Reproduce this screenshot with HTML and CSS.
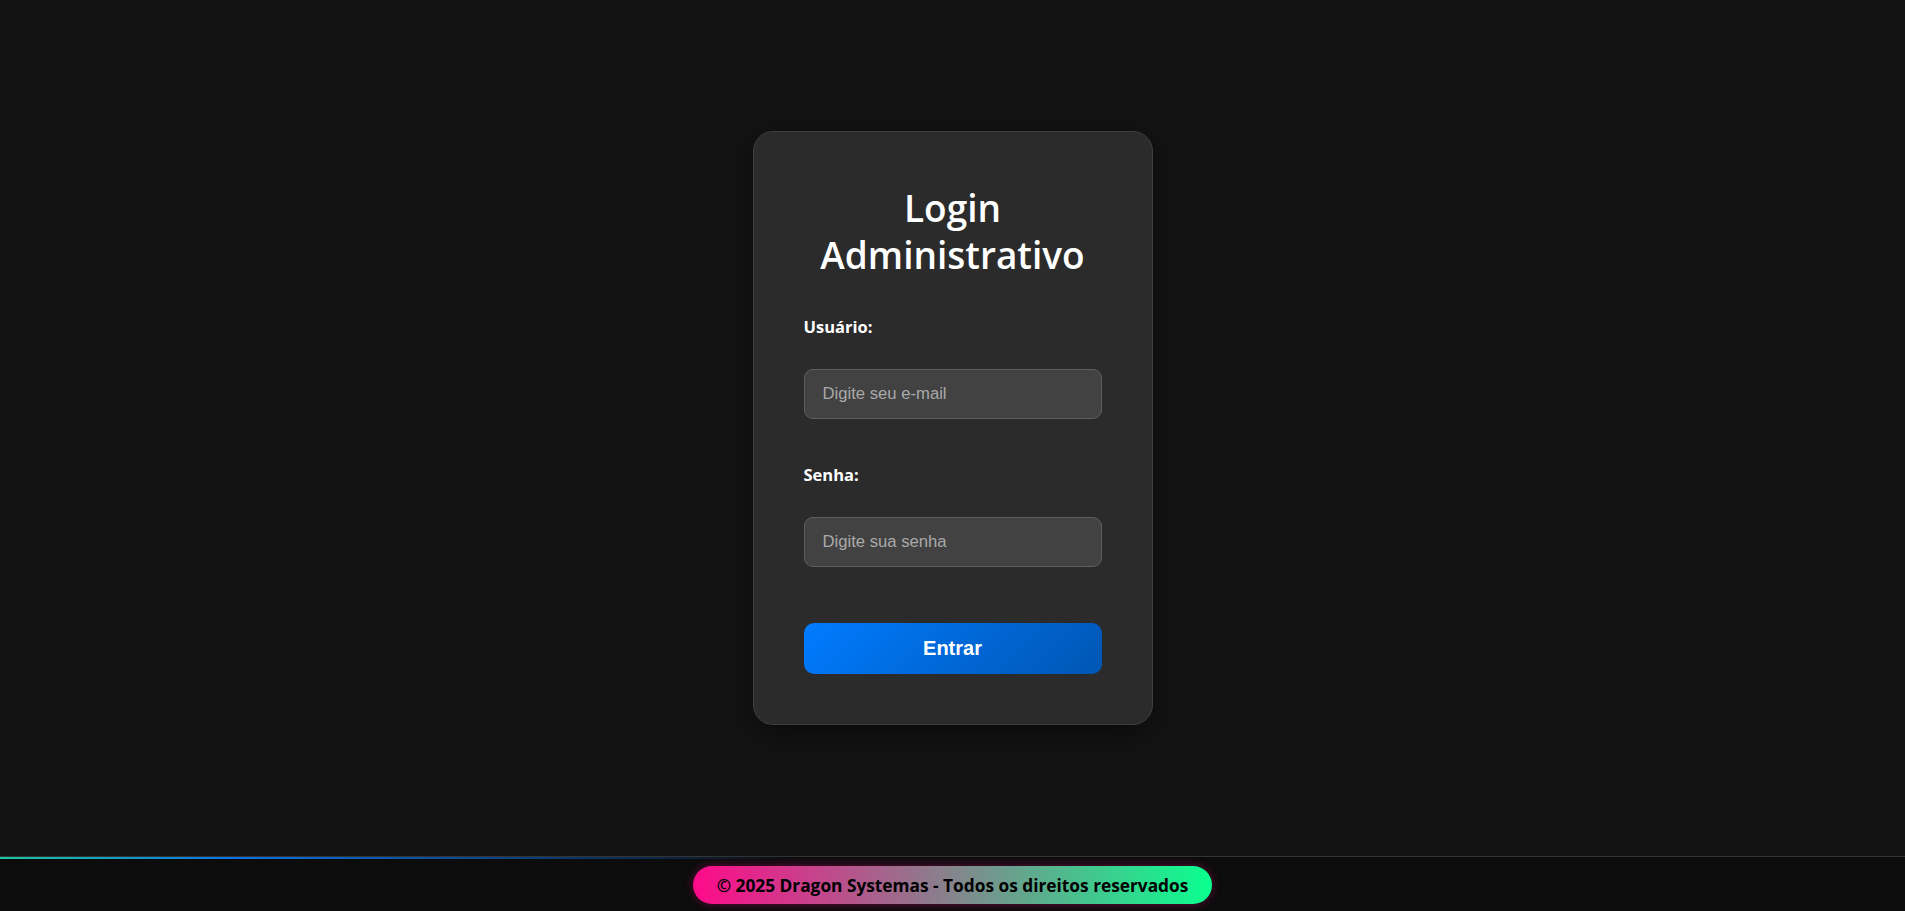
FILE: index.html
```html
<!DOCTYPE html>
<html lang="pt-BR">
<head>
    <meta charset="UTF-8">
    <meta name="viewport" content="width=device-width, initial-scale=1.0">
    <title>Login Administrativo</title>
    <link rel="stylesheet" href="styles.css">
</head>
<body>
    <main class="login-area">
        <div class="login-card">
            <h1 class="login-title">Login Administrativo</h1>
            <form class="login-form" id="loginForm">
                <div class="form-group">
                    <label for="usuario">Usuário:</label>
                    <input type="email" id="usuario" placeholder="Digite seu e-mail">
                </div>
                <div class="form-group">
                    <label for="senha">Senha:</label>
                    <input type="password" id="senha" placeholder="Digite sua senha">
                </div>
                <button type="submit" class="login-button">Entrar</button>
            </form>
        </div>
    </main>

    <footer class="site-footer">
        <div class="footer-line"></div>
        <div class="footer-content">
            <span class="footer-badge">© 2025 Dragon Systemas - Todos os direitos reservados</span>
        </div>
    </footer>
</body>
</html>
```

FILE: styles.css
```css
* {
    box-sizing: border-box;
}
body {
    margin: 0;
    height: 100vh;
    display: flex;
    flex-direction: column;
    background-color: #131313;
    color: #fff;
    font-family: "Open Sans", "Noto Sans", sans-serif;
}
.login-area {
    flex: 1;
    display: flex;
    align-items: center;
    justify-content: center;
}
.login-card {
    width: 400px;
    padding: 52px 50px 50px;
    background-color: #2b2b2b;
    border: 1px solid #3e3e3e;
    border-radius: 20px;
    box-shadow: 0 8px 30px rgba(0, 0, 0, 0.45);
}
.login-title {
    margin: 0 0 37px;
    font-size: 37px;
    line-height: 47px;
    font-weight: 600;
    text-align: center;
}
.form-group {
    margin-bottom: 44px;
}
.form-group:last-of-type {
    margin-bottom: 56px;
}
.form-group label {
    display: block;
    margin-bottom: 31px;
    font-size: 16.5px;
    line-height: 23px;
    font-weight: 700;
}
.form-group input {
    display: block;
    width: 100%;
    height: 50px;
    padding: 0 18px;
    background-color: #424242;
    border: 1px solid #5e5e5e;
    border-radius: 9px;
    color: #fff;
    font-family: "Liberation Sans", Arial, sans-serif;
    font-size: 16.67px;
    outline: none;
}
.form-group input::placeholder {
    color: #a9a9a9;
}
.login-button {
    display: block;
    width: 100%;
    height: 51px;
    border: none;
    border-radius: 10px;
    background: linear-gradient(135deg, #007bff, #0056b3);
    color: #fff;
    font-family: "Liberation Sans", Arial, sans-serif;
    font-size: 20px;
    font-weight: 700;
    cursor: pointer;
}
.site-footer {
    height: 55px;
    display: flex;
    flex-direction: column;
    background-color: #0c0c0c;
    border-top: 1px solid #333;
}
.footer-line {
    height: 2px;
    background: linear-gradient(90deg, #19c9a0 0%, #0a74e8 12%, #0a3e7a 28%, rgba(10, 40, 80, 0) 42%);
}
.footer-content {
    flex: 1;
    display: flex;
    align-items: center;
    justify-content: center;
}
.footer-badge {
    height: 38px;
    display: flex;
    align-items: center;
    padding: 0 24px;
    border-radius: 19px;
    background: linear-gradient(90deg, #ff0a8a, #0aff8f);
    box-shadow: 0 0 10px rgba(255, 10, 138, 0.35);
    color: #000;
    font-size: 17.3px;
    font-weight: 700;
}
```
